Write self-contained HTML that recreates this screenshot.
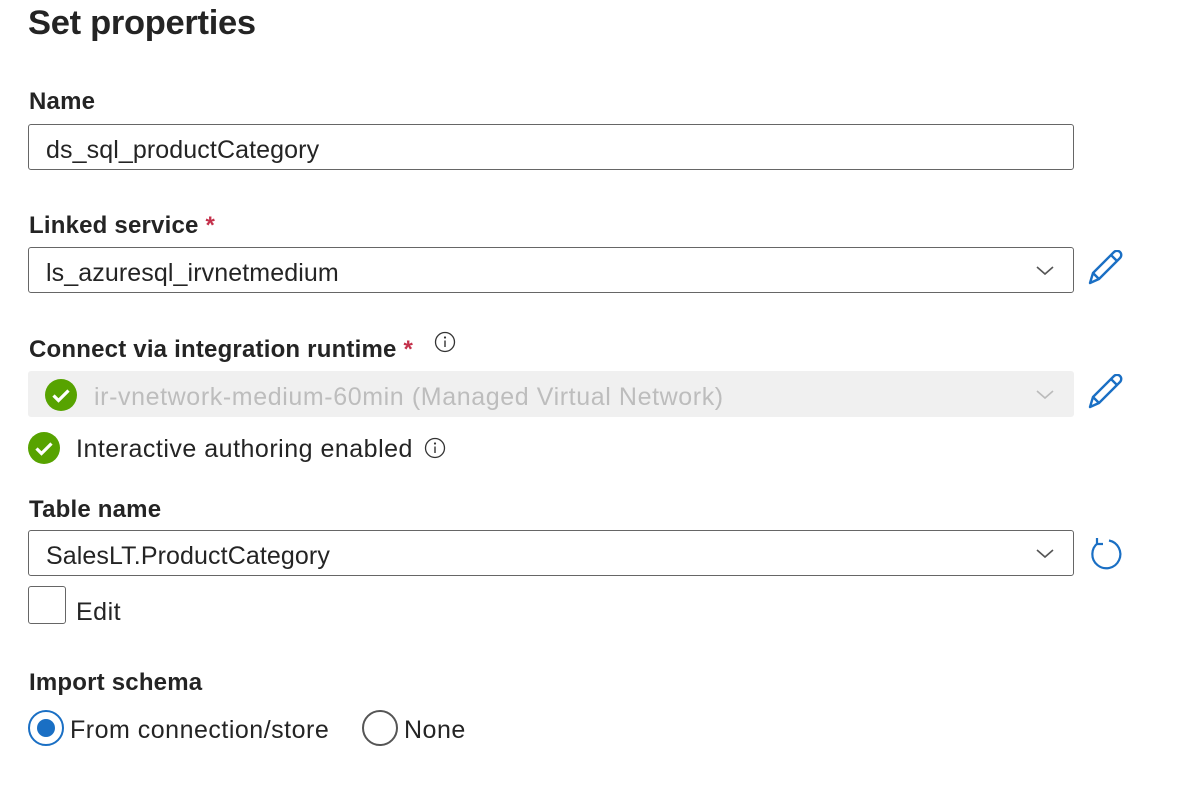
<!DOCTYPE html>
<html><head><meta charset="utf-8"><style>
body{margin:0;width:1182px;height:785px;background:#fff;font-family:"Liberation Sans",sans-serif;color:#242424;position:relative;overflow:hidden}
.a{position:absolute;white-space:nowrap}
.t{font-size:34.5px;font-weight:bold;left:28px;top:4px;color:#242424;letter-spacing:-0.3px}
.l{font-size:24px;font-weight:bold;left:29px;letter-spacing:0.2px}
.req{color:#c4314b}
.box{position:absolute;left:28px;height:44px;border:1.5px solid #666;border-radius:3px;font-size:25px;line-height:50px;padding-left:17px;box-sizing:content-box;width:1027px;letter-spacing:0.1px}
.dis{background:#f0f0f0;border-color:#f0f0f0;color:#bdbdbd;letter-spacing:0.6px}
.chev{position:absolute;right:18px;top:15px}
.txt{font-size:25px;letter-spacing:0.5px}
</style></head><body>
<div class="a t">Set properties</div>
<div class="a l" style="top:88px">Name</div>
<div class="box" style="top:124px">ds_sql_productCategory</div>

<div class="a l" style="top:212px">Linked service <span class="req">*</span></div>
<div class="box" style="top:247px">ls_azuresql_irvnetmedium<svg class="chev" width="20" height="14" viewBox="0 0 20 14"><path d="M2 4l8 7 8-7" fill="none" stroke="#555" stroke-width="1.6"/></svg></div>
<svg class="a" style="left:1088px;top:250px" width="36" height="36" viewBox="0 0 36 36"><path d="M2 33l3-10L26 2a4 4 0 016 6L11 29z M23 5l6 6 M5 23l6 6" fill="none" stroke="#1a6fc4" stroke-width="2.4" stroke-linejoin="round"/></svg>

<div class="a l" style="top:336px">Connect via integration runtime <span class="req">*</span></div>
<svg class="a" style="left:434px;top:331px" width="22" height="22" viewBox="0 0 22 22"><circle cx="11" cy="11" r="9.5" fill="none" stroke="#333" stroke-width="1.3"/><circle cx="11" cy="6.5" r="1.1" fill="#333"/><path d="M11 9.5v6.5" stroke="#333" stroke-width="1.4"/></svg>
<div class="box dis" style="top:371px;padding-left:65px;width:979px">ir-vnetwork-medium-60min (Managed Virtual Network)<svg class="chev" width="20" height="14" viewBox="0 0 20 14"><path d="M2 4l8 7 8-7" fill="none" stroke="#bbb" stroke-width="1.6"/></svg></div>
<svg class="a" style="left:45px;top:379px" width="32" height="32" viewBox="0 0 32 32"><circle cx="16" cy="16" r="16" fill="#57a300"/><path d="M8.5 16.5l5 5 10-10" fill="none" stroke="#fff" stroke-width="3.2"/></svg>
<svg class="a" style="left:1088px;top:374px" width="36" height="36" viewBox="0 0 36 36"><path d="M2 33l3-10L26 2a4 4 0 016 6L11 29z M23 5l6 6 M5 23l6 6" fill="none" stroke="#1a6fc4" stroke-width="2.4" stroke-linejoin="round"/></svg>

<svg class="a" style="left:28px;top:432px" width="32" height="32" viewBox="0 0 32 32"><circle cx="16" cy="16" r="16" fill="#57a300"/><path d="M8.5 16.5l5 5 10-10" fill="none" stroke="#fff" stroke-width="3.2"/></svg>
<div class="a txt" style="left:76px;top:435px">Interactive authoring enabled</div>
<svg class="a" style="left:424px;top:437px" width="22" height="22" viewBox="0 0 22 22"><circle cx="11" cy="11" r="9.5" fill="none" stroke="#333" stroke-width="1.3"/><circle cx="11" cy="6.5" r="1.1" fill="#333"/><path d="M11 9.5v6.5" stroke="#333" stroke-width="1.4"/></svg>

<div class="a l" style="top:496px">Table name</div>
<div class="box" style="top:530px">SalesLT.ProductCategory<svg class="chev" width="20" height="14" viewBox="0 0 20 14"><path d="M2 4l8 7 8-7" fill="none" stroke="#555" stroke-width="1.6"/></svg></div>
<svg class="a" style="left:1088px;top:536px" width="36" height="36" viewBox="0 0 36 36"><path d="M10 7A14 14 0 1 0 21 4.5" fill="none" stroke="#1a6fc4" stroke-width="2.2"/><path d="M9 2v6h6" fill="none" stroke="#1a6fc4" stroke-width="2.2"/></svg>

<div class="a" style="left:28px;top:586px;width:36px;height:36px;border:1.5px solid #666;border-radius:3px"></div>
<div class="a txt" style="left:76px;top:598px">Edit</div>

<div class="a l" style="top:669px">Import schema</div>
<div class="a" style="left:28px;top:710px;width:32px;height:32px;border:2px solid #1a6fc4;border-radius:50%"></div>
<div class="a" style="left:37px;top:719px;width:18px;height:18px;background:#1a6fc4;border-radius:50%"></div>
<div class="a txt" style="left:70px;top:716px">From connection/store</div>
<div class="a" style="left:362px;top:710px;width:32px;height:32px;border:2px solid #555;border-radius:50%"></div>
<div class="a txt" style="left:404px;top:716px">None</div>
</body></html>
